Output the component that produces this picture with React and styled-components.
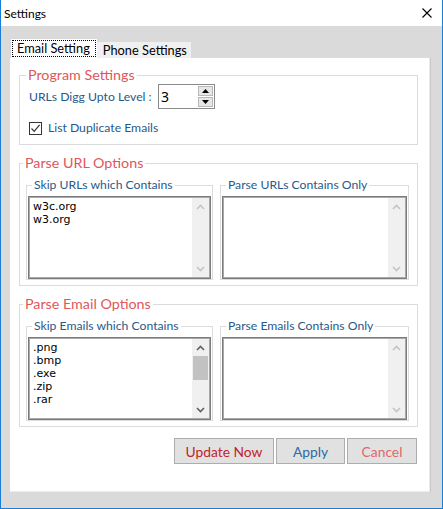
import React from 'react';
import styled, { createGlobalStyle } from 'styled-components';

const GlobalStyle = createGlobalStyle`
  html, body {
    margin: 0;
    padding: 0;
    background: #fff;
  }
  body {
    font-family: Lato, 'Noto Sans', sans-serif;
  }
`;

const BLUE = '#275a8c';

export default function App() {
    return (
        <>
            <GlobalStyle />
            <Window>
                <TitleBar>
                    <span>Settings</span>
                    <svg width='10' height='10' viewBox='0 0 10 10'>
                        <path d='M0.5 0.5 L9.5 9.5 M9.5 0.5 L0.5 9.5' stroke='#000' strokeWidth='1.1' />
                    </svg>
                </TitleBar>
                <Body>
                    <Tabs>
                        <Tab active>
                            <Focus>Email Setting</Focus>
                        </Tab>
                        <Tab>Phone Settings</Tab>
                    </Tabs>
                    <Page>
                        <Group>
                            <GroupTitle>Program Settings</GroupTitle>
                            <Row>
                                <Label width='129px'>URLs Digg Upto Level :</Label>
                                <Spinner>
                                    <SpinValue>3</SpinValue>
                                    <SpinButtons>
                                        <SpinButton>
                                            <svg width='7' height='4' viewBox='0 0 7 4'>
                                                <path d='M3.5 0 L7 4 L0 4 Z' fill='#000' />
                                            </svg>
                                        </SpinButton>
                                        <SpinButton>
                                            <svg width='7' height='4' viewBox='0 0 7 4'>
                                                <path d='M0 0 L7 0 L3.5 4 Z' fill='#000' />
                                            </svg>
                                        </SpinButton>
                                    </SpinButtons>
                                </Spinner>
                            </Row>
                            <CheckRow>
                                <CheckBox>
                                    <svg width='11' height='11' viewBox='0 0 11 11'>
                                        <path d='M1.5 5.5 L4.2 8.3 L9.6 1.8' stroke='#333' strokeWidth='1.2' fill='none' />
                                    </svg>
                                </CheckBox>
                                <Label>List Duplicate Emails</Label>
                            </CheckRow>
                        </Group>

                        <Group spaced>
                            <GroupTitle>Parse URL Options</GroupTitle>
                            <Columns>
                                <SubGroup>
                                    <SubTitle>Skip URLs which Contains</SubTitle>
                                    <ListBox lines={['w3c.org', 'w3.org']} />
                                </SubGroup>
                                <SubGroup>
                                    <SubTitle>Parse URLs Contains Only</SubTitle>
                                    <ListBox lines={[]} />
                                </SubGroup>
                            </Columns>
                        </Group>

                        <Group spaced>
                            <GroupTitle>Parse Email Options</GroupTitle>
                            <Columns>
                                <SubGroup>
                                    <SubTitle>Skip Emails which Contains</SubTitle>
                                    <ListBox
                                        lines={['.png', '.bmp', '.exe', '.zip', '.rar']}
                                        scrollable
                                    />
                                </SubGroup>
                                <SubGroup>
                                    <SubTitle>Parse Emails Contains Only</SubTitle>
                                    <ListBox lines={[]} />
                                </SubGroup>
                            </Columns>
                        </Group>

                        <Buttons>
                            <Button width='100px' color='#c0242c'>Update Now</Button>
                            <Button width='69px' color='#2d6aa5'>Apply</Button>
                            <Button width='70px' color='#e0676a'>Cancel</Button>
                        </Buttons>
                    </Page>
                </Body>
            </Window>
        </>
    );
}

function ListBox({ lines, scrollable }) {
    const arrow = scrollable ? '#606060' : '#c4c4c4';
    return (
        <ListFrame>
            <ListText>
                {lines.map((l) => (
                    <div key={l}>{l}</div>
                ))}
            </ListText>
            <ScrollBar>
                <ScrollArrow>
                    <svg width='9' height='6' viewBox='0 0 9 6'>
                        <path d='M1 5 L4.5 1.5 L8 5' stroke={arrow} strokeWidth='1.6' fill='none' />
                    </svg>
                </ScrollArrow>
                <ScrollTrack>{scrollable && <Thumb />}</ScrollTrack>
                <ScrollArrow>
                    <svg width='9' height='6' viewBox='0 0 9 6'>
                        <path d='M1 1 L4.5 4.5 L8 1' stroke={arrow} strokeWidth='1.6' fill='none' />
                    </svg>
                </ScrollArrow>
            </ScrollBar>
        </ListFrame>
    );
}

const Window = styled.div`
    width: 443px;
    height: 509px;
    box-sizing: border-box;
    border: 1px solid #1a7fd4;
    border-top: none;
    display: flex;
    flex-direction: column;
    background: #dadada;
`;

const TitleBar = styled.div`
    height: 26px;
    flex: 0 0 26px;
    background: #fff;
    display: flex;
    align-items: center;
    justify-content: space-between;
    padding: 0 10px 0 3px;
    font-size: 12px;
    color: #000;
`;

const Body = styled.div`
    flex: 1;
    display: flex;
    flex-direction: column;
    padding: 13px 11px 16px 9px;
    min-height: 0;
`;

const Tabs = styled.div`
    display: flex;
    align-items: flex-end;
    height: 19px;
    padding-left: 1px;
`;

const Tab = styled.div`
    box-sizing: border-box;
    height: ${(p) => (p.active ? '19px' : '16px')};
    padding: ${(p) => (p.active ? '1px' : '0 4px 0 6px')};
    background: ${(p) => (p.active ? '#fff' : '#f0f0f0')};
    font-size: 12.8px;
    line-height: 16px;
    color: #000;
    display: flex;
    align-items: center;
    white-space: nowrap;
`;

const Focus = styled.span`
    display: block;
    border: 1px dotted #000;
    padding: 0 5px 0 4px;
    line-height: 15px;
`;

const Page = styled.div`
    flex: 1;
    background: #fff;
    display: flex;
    flex-direction: column;
    padding: 9px 13px 0 9px;
    box-shadow: inset -1px 0 0 #c8c8c8, inset -2px 0 0 #ececec, inset 0 -1px 0 #ececec;
`;

const Group = styled.fieldset`
    margin: ${(p) => (p.spaced ? '10px' : '0')} 0 0;
    border: 1px solid #dcdcdc;
    padding: ${(p) => (p.spaced ? '6px 8px 5px 6px' : '1px 8px 8px 9px')};
    min-width: 0;
`;

const GroupTitle = styled.legend`
    padding: 0 2px;
    margin-left: -3px;
    color: #e0575b;
    font-size: 14.3px;
    line-height: 16px;
`;

const Row = styled.div`
    display: flex;
    align-items: center;
`;

const CheckRow = styled(Row)`
    margin-top: 11px;
    gap: 6px;
`;

const Label = styled.span`
    color: ${BLUE};
    font-size: 12.2px;
    line-height: 16px;
    white-space: nowrap;
    flex: ${(p) => (p.width ? `0 0 ${p.width}` : '0 0 auto')};
`;

const Spinner = styled.div`
    box-sizing: border-box;
    width: 57px;
    height: 25px;
    border: 1px solid #8a8a8a;
    display: flex;
    align-items: center;
    justify-content: space-between;
    padding: 0 1px 0 2px;
`;

const SpinValue = styled.span`
    font-family: 'Noto Sans', sans-serif;
    font-size: 14px;
    color: #000;
`;

const SpinButtons = styled.div`
    display: flex;
    flex-direction: column;
    gap: 1px;
`;

const SpinButton = styled.div`
    box-sizing: border-box;
    width: 15px;
    height: 10px;
    background: #e6e6e6;
    border: 1px solid #b8b8b8;
    display: flex;
    align-items: center;
    justify-content: center;
`;

const CheckBox = styled.div`
    box-sizing: border-box;
    width: 13px;
    height: 13px;
    border: 1px solid #333;
    background: #fff;
    display: flex;
    align-items: center;
    justify-content: center;
`;

const Columns = styled.div`
    display: grid;
    grid-template-columns: 187px 189px;
    gap: 7px;
`;

const SubGroup = styled.fieldset`
    margin: 0;
    border: 1px solid #dcdcdc;
    padding: 3px 1px 0 1px;
    min-width: 0;
`;

const SubTitle = styled.legend`
    padding: 0 2px;
    margin-left: 4px;
    color: ${BLUE};
    font-size: 12.2px;
    line-height: 16px;
`;

const ListFrame = styled.div`
    box-sizing: border-box;
    height: 83px;
    border: 1px solid #7a7a7a;
    box-shadow: inset 0 0 0 1px #a9a9a9;
    padding: 1px;
    display: flex;
    background: #fff;
`;

const ListText = styled.div`
    flex: 1;
    padding: 2px 0 0 3px;
    font-family: 'DejaVu Sans', Verdana, sans-serif;
    font-size: 11px;
    line-height: 13px;
    color: #000;
`;

const ScrollBar = styled.div`
    width: 17px;
    background: #f0f0f0;
    display: flex;
    flex-direction: column;
`;

const ScrollArrow = styled.div`
    height: 17px;
    display: flex;
    align-items: center;
    justify-content: center;
`;

const ScrollTrack = styled.div`
    flex: 1;
`;

const Thumb = styled.div`
    height: 24px;
    margin: 0 1px;
    background: #c2c2c2;
`;

const Buttons = styled.div`
    display: flex;
    justify-content: flex-end;
    gap: 2px;
    margin: 11px 1px 0 0;
`;

const Button = styled.button`
    box-sizing: border-box;
    width: ${(p) => p.width};
    height: 26px;
    background: #e1e1e1;
    border: 1px solid #adadad;
    color: ${(p) => p.color};
    font-family: Lato, 'Noto Sans', sans-serif;
    font-size: 13.8px;
    padding: 0;
`;
